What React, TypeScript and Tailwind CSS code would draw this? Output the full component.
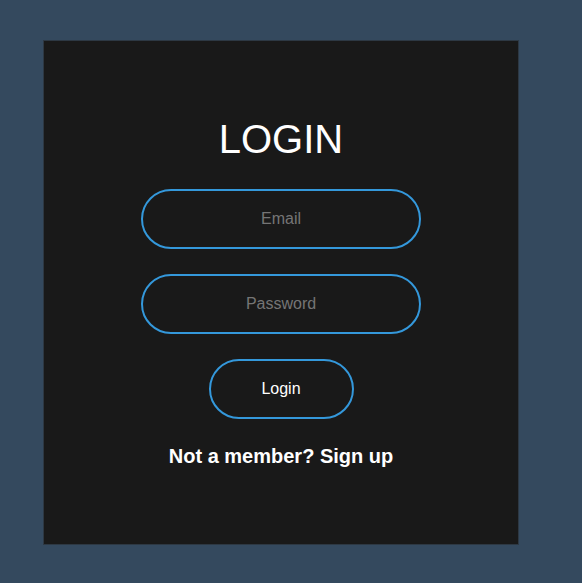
import React from "react";

export default function App() {
  return (
    <div className="w-[582px] h-[583px] bg-[#34495e] pt-[40px] pl-[43px] overflow-hidden" style={{ fontFamily: '"Liberation Sans", Arial, sans-serif' }}>
      <form
        onSubmit={(e) => e.preventDefault()}
        className="w-[476px] h-[505px] bg-[#191919] border border-[#2d3843] flex flex-col items-center pt-[78px]"
      >
        <h1 className="text-[40px] leading-[40px] font-normal text-white uppercase">Login</h1>
        <input
          type="text"
          placeholder="Email"
          className="mt-[30px] w-[280px] h-[60px] rounded-full border-2 border-[#3498db] bg-transparent text-center text-[16px] text-white placeholder:text-[#757575] outline-none"
        />
        <input
          type="password"
          placeholder="Password"
          className="mt-[25px] w-[280px] h-[60px] rounded-full border-2 border-[#3498db] bg-transparent text-center text-[16px] text-white placeholder:text-[#757575] outline-none"
        />
        <button
          type="submit"
          className="mt-[25px] w-[145px] h-[60px] rounded-full border-2 border-[#3498db] bg-transparent text-center text-[16px] text-white"
        >
          Login
        </button>
        <p className="mt-[27px] text-[20px] leading-[20px] font-bold text-white">Not a member? Sign up</p>
      </form>
    </div>
  );
}
